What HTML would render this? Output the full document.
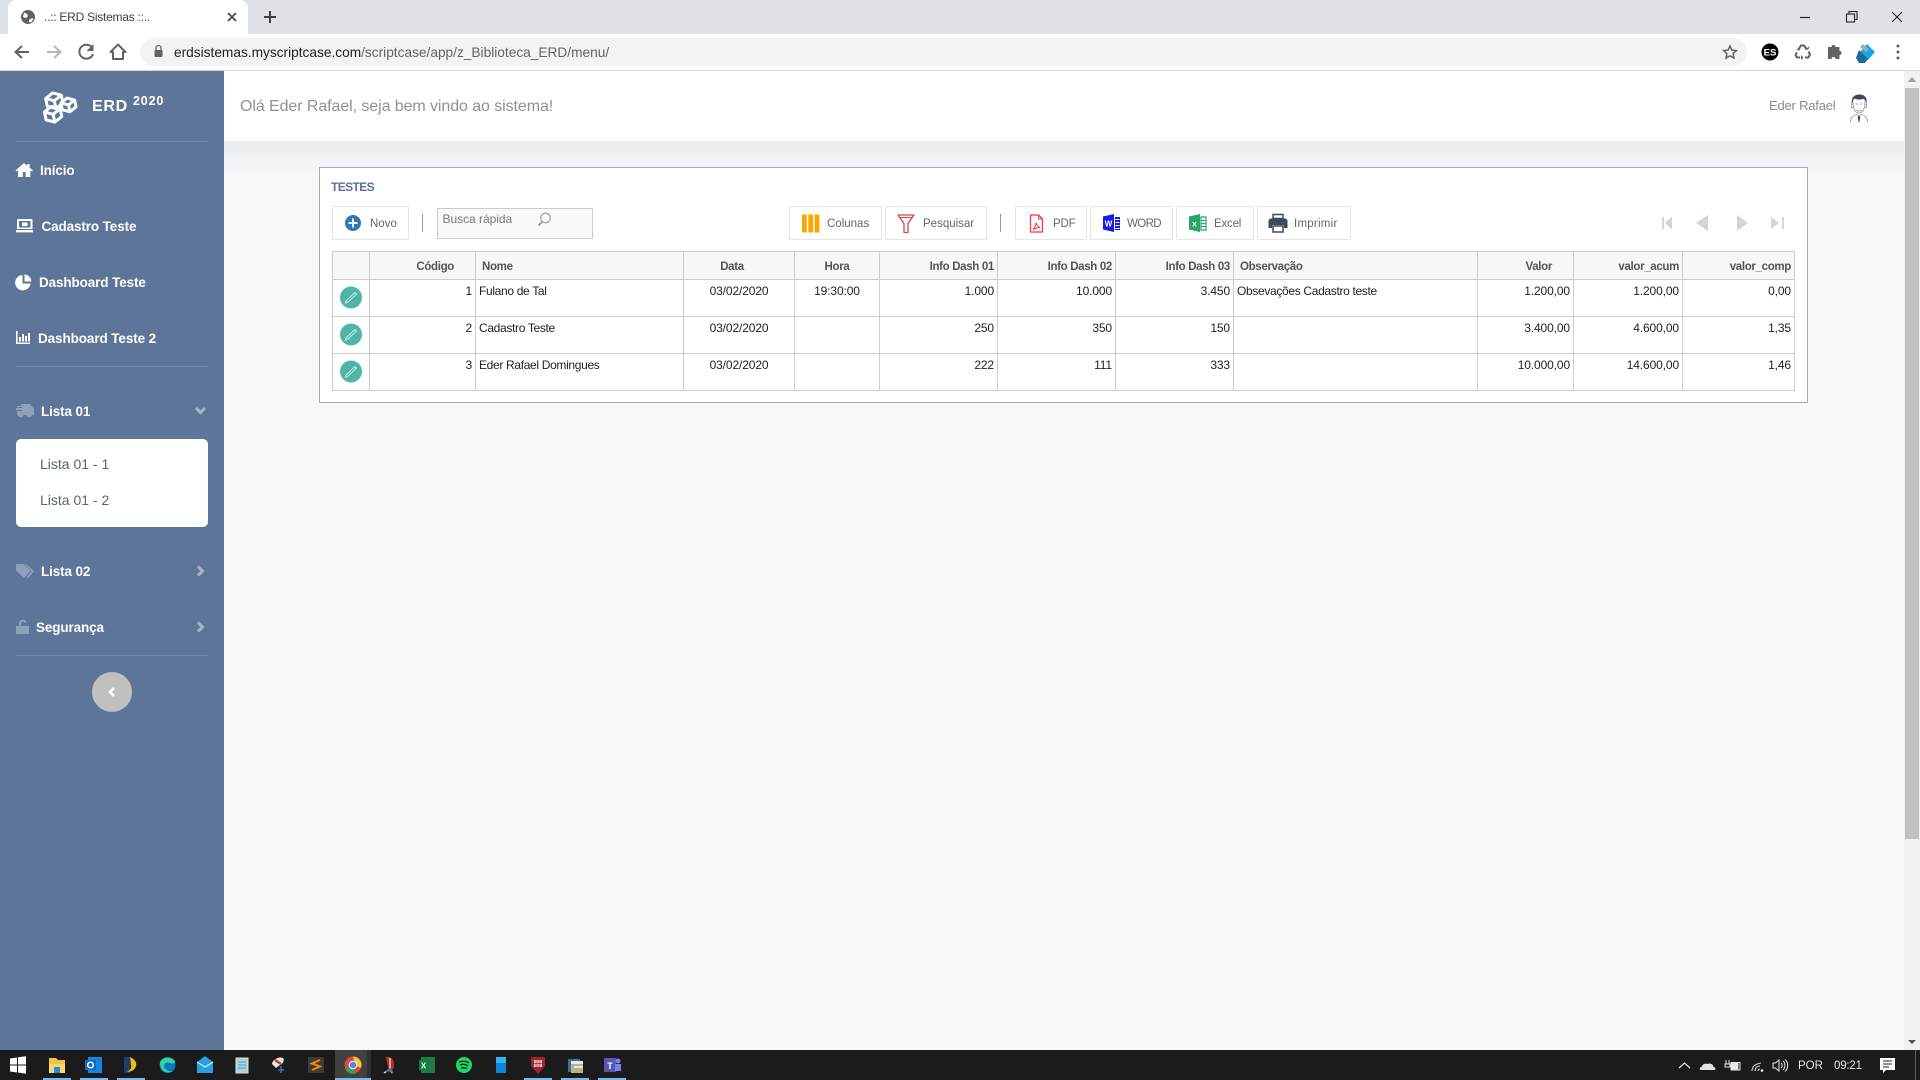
<!DOCTYPE html>
<html lang="pt"><head><meta charset="utf-8"><title>..:: ERD Sistemas ::..</title>
<style>
html,body{margin:0;padding:0;width:1920px;height:1080px;overflow:hidden;background:#f8f8f9;font-family:"Liberation Sans",sans-serif}
.a{position:absolute}
.t{position:absolute;white-space:nowrap;height:20px;line-height:20px}
.btn{position:absolute;top:206px;height:32px;border:1px solid #e1e6ee;border-radius:2px;background:#fff}
.b{font-size:11.5px;color:#666}
.m{font-size:13.5px;font-weight:700;color:#fff;letter-spacing:-.12px}
table{position:absolute;left:332px;top:251px;width:1462px;border-collapse:collapse;table-layout:fixed;font-size:12px;color:#222;background:#fff}
td,th{border:1px solid #ccc;padding:3px;line-height:16px;vertical-align:top;white-space:nowrap;overflow:hidden}
td{letter-spacing:-.12px}
td.L{letter-spacing:-.33px}
th{background:#f7f7f7;color:#555;font-weight:700;font-size:11.5px;letter-spacing:-.33px;padding:7px 3px 3px;line-height:17px}
tr.h{height:28px}tr.r{height:37px}
.R{text-align:right}.C{text-align:center}
</style></head><body>
<div class="a" style="left:0;top:0;width:1920px;height:34px;background:#dee1e6"></div>
<div class="a" style="left:8px;top:0;width:240px;height:34px;background:#fff;border-radius:8px 8px 0 0"></div>
<div class="a" style="left:0;top:34px;width:1920px;height:36px;background:#fff"></div>
<div class="a" style="left:0;top:70px;width:1920px;height:1px;background:#d4d6d9"></div>
<div class="a" style="left:140px;top:38px;width:1607px;height:28px;background:#f1f3f4;border-radius:14px"></div>
<div class="t" style="left:44px;top:7px;font-size:12px;color:#3c4043;letter-spacing:-.25px">..:: ERD Sistemas ::..</div>
<div class="t" style="left:174px;top:43px;font-size:13.7px;color:#202124">erdsistemas.myscriptcase.com<span style="color:#5f6368">/scriptcase/app/z_Biblioteca_ERD/menu/</span></div>

<div class="a" style="left:224px;top:71px;width:1680px;height:979px;background:#f8f8f9"></div>
<div class="a" style="left:224px;top:141px;width:1680px;height:36px;background:linear-gradient(#e9ebef,#f3f4f8 60%,#f8f8f9)"></div>
<div class="a" style="left:224px;top:71px;width:1680px;height:70px;background:#fff"></div>
<div class="t" style="left:240px;top:97px;font-size:16px;color:#8a929e;letter-spacing:-.08px">Olá Eder Rafael, seja bem vindo ao sistema!</div>
<div class="t" style="left:1769px;top:96px;font-size:13px;color:#838c9c;letter-spacing:-.2px">Eder Rafael</div>

<div class="a" style="left:0;top:71px;width:224px;height:979px;background:#5d7599"></div>
<div class="a" style="left:16px;top:141px;width:192px;height:1px;background:#7287a6"></div>
<div class="a" style="left:16px;top:366px;width:192px;height:1px;background:#7287a6"></div>
<div class="a" style="left:16px;top:655px;width:192px;height:1px;background:#7287a6"></div>
<div class="t" style="left:92px;top:97px;font-size:16px;font-weight:700;color:#fff;letter-spacing:.7px">ERD</div>
<div class="t" style="left:133px;top:91px;font-size:12.5px;font-weight:700;color:#fff;letter-spacing:.85px">2020</div>
<div class="t m" style="left:40px;top:161px">Início</div>
<div class="t m" style="left:41.500px;top:217px">Cadastro Teste</div>
<div class="t m" style="left:39px;top:273px">Dashboard Teste</div>
<div class="t m" style="left:38px;top:329px;letter-spacing:-.1px">Dashboard Teste 2</div>
<div class="t m" style="left:41px;top:402px">Lista 01</div>
<div class="a" style="left:16px;top:439px;width:192px;height:88px;background:#fff;border-radius:5px"></div>
<div class="t" style="left:40px;top:454px;font-size:14px;color:#5a6472">Lista 01 - 1</div>
<div class="t" style="left:40px;top:490px;font-size:14px;color:#5a6472">Lista 01 - 2</div>
<div class="t m" style="left:41px;top:561.500px">Lista 02</div>
<div class="t m" style="left:36px;top:617.500px">Segurança</div>

<div class="a" style="left:319px;top:167px;width:1487px;height:234px;background:#fff;border:1px solid #aaa"></div>
<div class="t" style="left:331px;top:177px;font-size:12px;font-weight:700;color:#5f7199;letter-spacing:-.6px">TESTES</div>
<div class="btn" style="left:332px;width:75px"></div>
<div class="t b" style="left:370px;top:213.500px">Novo</div>
<div class="a" style="left:422px;top:214px;width:1px;height:18px;background:#999"></div>
<div class="a" style="left:437px;top:208px;width:154px;height:29px;background:#f9f9f9;border:1px solid #ccc"></div>
<div class="t" style="left:442.500px;top:208.500px;font-size:12px;color:#777;letter-spacing:-.03px">Busca rápida</div>
<div class="btn" style="left:789px;width:91px"></div><div class="t b" style="left:827px;top:213.500px">Colunas</div>
<div class="btn" style="left:885px;width:100px"></div><div class="t b" style="left:923px;top:213.500px">Pesquisar</div>
<div class="a" style="left:1000px;top:214px;width:1px;height:18px;background:#999"></div>
<div class="btn" style="left:1015px;width:70px"></div><div class="t b" style="left:1053px;top:213.500px;letter-spacing:-.2px">PDF</div>
<div class="btn" style="left:1090px;width:81px"></div><div class="t b" style="left:1127px;top:213.500px;letter-spacing:-.6px">WORD</div>
<div class="btn" style="left:1176px;width:76px"></div><div class="t b" style="left:1214px;top:213.500px;letter-spacing:-.2px">Excel</div>
<div class="btn" style="left:1257px;width:92px"></div><div class="t b" style="left:1294px;top:213.500px;letter-spacing:.25px">Imprimir</div>

<table>
<colgroup><col style="width:37px"><col style="width:106px"><col style="width:208px"><col style="width:111px"><col style="width:85px"><col style="width:118px"><col style="width:118px"><col style="width:118px"><col style="width:244px"><col style="width:96px"><col style="width:109px"><col style="width:112px"></colgroup>
<tr class="h"><th></th><th class="R" style="padding-right:21px">Código</th><th style="text-align:left;padding-left:6px">Nome</th><th class="C" style="padding-right:17px">Data</th><th class="C">Hora</th><th class="R">Info Dash 01</th><th class="R">Info Dash 02</th><th class="R">Info Dash 03</th><th style="text-align:left;padding-left:6px">Observação</th><th class="R" style="padding-right:21px">Valor</th><th class="R">valor_acum</th><th class="R">valor_comp</th></tr>
<tr class="r"><td></td><td class="R">1</td><td class="L">Fulano de Tal</td><td class="C">03/02/2020</td><td class="C">19:30:00</td><td class="R">1.000</td><td class="R">10.000</td><td class="R">3.450</td><td class="L">Obsevações Cadastro teste</td><td class="R">1.200,00</td><td class="R">1.200,00</td><td class="R">0,00</td></tr>
<tr class="r"><td></td><td class="R">2</td><td class="L">Cadastro Teste</td><td class="C">03/02/2020</td><td></td><td class="R">250</td><td class="R">350</td><td class="R">150</td><td></td><td class="R">3.400,00</td><td class="R">4.600,00</td><td class="R">1,35</td></tr>
<tr class="r"><td></td><td class="R">3</td><td class="L">Eder Rafael Domingues</td><td class="C">03/02/2020</td><td></td><td class="R">222</td><td class="R">111</td><td class="R">333</td><td></td><td class="R">10.000,00</td><td class="R">14.600,00</td><td class="R">1,46</td></tr>
</table>

<div class="a" style="left:1904px;top:71px;width:16px;height:979px;background:#f1f1f1"></div>
<div class="a" style="left:1905px;top:88px;width:14px;height:751px;background:#c1c1c1"></div>
<div class="a" style="left:0;top:1050px;width:1920px;height:30px;background:#1b1b1b"></div>
<div class="a" style="left:335px;top:1050px;width:32px;height:30px;background:#414141"></div>
<div class="a" style="left:367px;top:1050px;width:4px;height:30px;background:#303030"></div>
<div class="t" style="left:1798px;top:1055.500px;font-size:11.5px;color:#e6e6e6">POR</div>
<div class="t" style="left:1834px;top:1055.500px;font-size:11.5px;color:#e6e6e6;letter-spacing:-.2px">09:21</div>

<svg class="a" style="left:0;top:0" width="1920" height="1080" viewBox="0 0 1920 1080" fill="none">
<!-- favicon -->
<circle cx="28" cy="17" r="7" fill="#5f6368"/><path d="M24 12.500l3 1.500 1 2-2 2-3-1zM29 20l3-2 1.500 1-2.500 3.500-2-.5z" fill="#fff"/>
<path d="M228 13l8 8M236 13l-8 8" stroke="#45484c" stroke-width="1.700"/>
<path d="M270 11v12M264 17h12" stroke="#3c4043" stroke-width="2"/>
<!-- nav -->
<path d="M29 52H16M22 46l-6.500 6 6.500 6" stroke="#5f6368" stroke-width="2"/>
<path d="M47 52h13M54 46l6.500 6-6.500 6" stroke="#b3b6ba" stroke-width="2"/>
<path d="M92 47.500A7 7 0 1 0 93 54" stroke="#5f6368" stroke-width="2"/><path d="M93.500 44v7h-7z" fill="#5f6368"/>
<path d="M110.500 52l7.500-7.500 7.500 7.500h-2.500v7h-10v-7z" stroke="#5f6368" stroke-width="2" stroke-linejoin="round"/>
<rect x="154.500" y="50" width="8" height="7" rx="1" fill="#5f6368"/><path d="M156 50v-2a2.500 2.500 0 0 1 5 0v2" stroke="#5f6368" stroke-width="1.300"/>
<path d="M1730 46l1.900 4.100 4.500.5-3.300 3 .9 4.400-4-2.200-4 2.200.9-4.400-3.300-3 4.500-.5z" stroke="#5f6368" stroke-width="1.500"/>
<circle cx="1770" cy="52" r="8.500" fill="#000"/><text x="1770" y="55.500" text-anchor="middle" font-family="Liberation Sans" font-weight="700" font-size="9.500" fill="#fff">ES</text>
<g stroke="#5f6368" stroke-width="2" stroke-linejoin="round">
<path d="M1798 50l3-4.500h3l2.500 3.500"/><path d="M1808.500 51.500l1.500 3-1.500 3h-3.500"/><path d="M1800 57.500h-3l-1.500-2.500 1.500-2.500"/>
</g>
<path d="M1805 50l3.500-.5 1-3.500zM1801 55l2.500 2.500-2.500 2.500zM1796 49.500l3.500 1 1-2.500z" fill="#5f6368"/>
<path d="M1828 48h3.500a2 2 0 0 1 4 0h4v4a2 2 0 0 1 0 4v4h-4a2 2 0 0 0-4 0h-3.500z" fill="#5f6368" transform="translate(0,-1)"/>
<path d="M1867 44l8 8-7 8-8-8z" fill="#17a6ee"/><path d="M1858 51l9 9-3 4-6 0-3-5z" fill="#1f6a9c" transform="translate(1,-1)"/><path d="M1861 44l3-3 6 5-3 3z" fill="#a9a9a9" transform="translate(-1,3)"/>
<circle cx="1898" cy="46" r="1.500" fill="#5f6368"/><circle cx="1898" cy="52" r="1.500" fill="#5f6368"/><circle cx="1898" cy="58" r="1.500" fill="#5f6368"/>
<!-- window -->
<path d="M1800 17.500h10" stroke="#222" stroke-width="1.200"/>
<rect x="1846.500" y="14" width="8" height="8" stroke="#222" stroke-width="1.100"/><path d="M1849 14v-2.500h8v8h-2.500" stroke="#222" stroke-width="1.100"/>
<path d="M1892 12l10 10M1902 12l-10 10" stroke="#222" stroke-width="1.100"/>
<!-- logo -->
<g stroke="#fff" stroke-width="3" stroke-linejoin="round" transform="translate(-1.500 0) rotate(-12 60 106)">
<g transform="translate(57 100)"><path d="M-8-4L0-8 8-4V4L0 8-8 4z"/><path d="M-8-4L0 0 8-4M0 0V8"/></g>
<g transform="translate(70 107)"><path d="M-7-3.500L0-7 7-3.500V3.500L0 7-7 3.500z"/><path d="M-7-3.500L0 0 7-3.500M0 0V7"/></g>
<g transform="translate(53 113)"><path d="M-8-4L0-8 8-4V4L0 8-8 4z"/><path d="M-8-4L0 0 8-4M0 0V8"/></g>
</g>
<!-- menu icons -->
<g fill="#fff">
<path d="M24 163l-8.500 7.500 1 1 1.500-1.300V177h4.800v-5h2.800v5h4.800v-6.800l1.500 1.300 1-1-3.300-3V164h-2.300v1.800z"/>
<path d="M18 219h13.500a1 1 0 0 1 1 1v9h-15.500v-9a1 1 0 0 1 1-1zm1 2v6.500h11.500V221zM16 230h17v2.400H16z" fill-rule="evenodd"/><path d="M22 222.500h5.500v3.500H22z"/>
<path d="M22.500 275a7.700 7.700 0 1 0 8 8.500h-8zM24.500 274.500a7 7 0 0 1 6.800 7h-6.800z"/>
<path d="M16 331h1.600v11.500H30v1.500H16zM19 337h2v4.500h-2zM22 334h2v7.500h-2zM25 336h2v5.500h-2zM28 333h2v8.500h-2z"/>
</g>
<g fill="#8ea0ba">
<path d="M21 404h9l4 5v6h-2a2.800 2.800 0 0 1-5.500 0h-3a2.800 2.800 0 0 1-5.500 0h-1v-4h5v-1h-6v-2h6v-1h-5v-1h4z"/>
<path d="M16 564h7.500l7 7-6.500 7-8-7.500zM26 564l8 7.500-6.500 7-1.200-1.200 5.200-5.800-6.800-7.500z"/>
<path d="M17 626h12v8H16v-8zM19 626v-3a3.800 3.800 0 0 1 7.500-.5h-2.300a1.600 1.600 0 0 0-3 .5v3z"/>
</g>
<g stroke="#a7b5ca" stroke-width="3">
<path d="M196 408l4.500 4.500 4.500-4.500"/><path d="M198 566.500l4.500 4.500-4.500 4.500"/><path d="M198 622.500l4.500 4.500-4.500 4.500"/>
</g>
<circle cx="112" cy="692" r="20" fill="#c0c0c0"/><path d="M114 688l-4 4 4 4" stroke="#fff" stroke-width="2.500"/>
<!-- avatar -->
<g stroke="#9aa0a8" stroke-width=".9">
<path d="M1853 101c0 8 2 12 6 12s6-4 6-12" fill="#fff"/><path d="M1853 104h-1.500v3.500h2M1865 104h1.500v3.500h-2"/>
<path d="M1850.500 122c0-5 3-6.500 6-7.500l2.500 1.500 2.500-1.500c3 1 6 2.500 6 7.500"/>
<path d="M1856 110c2 1.500 4 1.500 6 0M1855.500 104h2.500M1860 104h2.500"/>
</g>
<path d="M1859 115.500l-1.300 1.500 1 5.500h.6l1-5.500z" fill="#39424e"/>
<path d="M1852 104c-1.500-7 3-9.500 7.500-9.500 5.500 0 8 3.500 7 9-1-3-2-4.500-3.500-4.500-3 1-7 .5-8.500-.5-1.300 1-2 3-2.500 5.500z" fill="#3f4a59"/>
<!-- toolbar icons -->
<circle cx="353" cy="223" r="8" fill="#2a7ab8"/><path d="M353 218.500v9M348.500 223h9" stroke="#fff" stroke-width="2"/>
<circle cx="545.500" cy="218" r="4.800" stroke="#999" stroke-width="1.100"/><path d="M542 222l-3.500 3.500" stroke="#999" stroke-width="1.800"/>
<path d="M802 214.500h4.800v18H802zM808.300 214.500h4.800v18h-4.800zM814.600 214.500h4.800v18h-4.800z" fill="#ffa500"/>
<path d="M898 215h16l-6 8.500v9h-4v-9z" stroke="#d8474b" stroke-width="1.300" stroke-linejoin="round"/><path d="M900.500 217.500h11" stroke="#d8474b" stroke-width="1"/>
<path d="M1030.500 215h8l4 4v13h-12z" stroke="#f2374a" stroke-width="1.300"/><path d="M1038.500 215v4h4M1033 229.500c2-2 3-5 3-7 1 3 2.500 4.500 4 5-2 0-5 1-7 2z" stroke="#f2374a" stroke-width="1"/>
<path d="M1103 216.500l11-2.500v18l-11-2.500z" fill="#1a1ae0"/><path d="M1115 217h5v13h-5z" fill="#1a1ae0"/><path d="M1115.500 219.500h4M1115.500 222.500h4M1115.500 225.500h4M1115.500 228.500h4" stroke="#fff" stroke-width="1"/><text x="1108.500" y="226.500" text-anchor="middle" font-family="Liberation Sans" font-weight="700" font-size="8" fill="#fff">W</text>
<path d="M1189 216.500l11-2.500v18l-11-2.500z" fill="#2aa568"/><path d="M1201 217h5v13h-5z" stroke="#2aa568" stroke-width="1.200"/><path d="M1201.500 220.500h4M1201.500 223.500h4M1201.500 226.500h4" stroke="#2aa568"/><text x="1194.500" y="226.500" text-anchor="middle" font-family="Liberation Sans" font-weight="700" font-size="8.500" fill="#fff">x</text>
<path d="M1273 214.500h10v4h-10z" fill="#fff" stroke="#3e4a59" stroke-width="1.500"/><path d="M1271 218.500h14a2.500 2.500 0 0 1 2.500 2.500v7h-3.500v-3h-12v3h-3.500v-7a2.500 2.500 0 0 1 2.500-2.500z" fill="#3e4a59"/><path d="M1273 226h10v6h-10z" fill="#fff" stroke="#3e4a59" stroke-width="1.500"/>
<!-- pager -->
<g fill="#d0d5de"><path d="M1662 217h2v12h-2zM1665 223l7-6.500v13zM1696 223l12-8v16zM1737 215l11 8-11 8zM1771 217l8 6-8 6zM1782 217h2v12h-2z"/></g>
<!-- edit -->
<g>
<circle cx="351" cy="297.500" r="11" fill="#4db6a8"/><path d="M346 301l9-8.500 1.500 1.500-9 8.500-2.200.7z" stroke="#d2eee9" stroke-width=".9"/>
<circle cx="351" cy="334.500" r="11" fill="#4db6a8"/><path d="M346 338l9-8.500 1.500 1.500-9 8.500-2.200.7z" stroke="#d2eee9" stroke-width=".9"/>
<circle cx="351" cy="371.500" r="11" fill="#4db6a8"/><path d="M346 375l9-8.500 1.500 1.500-9 8.500-2.200.7z" stroke="#d2eee9" stroke-width=".9"/>
</g>
<!-- scroll arrows -->
<path d="M1912 77l4.500 5h-9z" fill="#a3a3a3"/><path d="M1912 1044l-4-4h8z" fill="#505050"/>
<!-- taskbar -->
<path d="M10 1058.500l7-1v7h-7zM18 1057.300l8-1.100v8.300h-8zM10 1065.500h7v7l-7-1zM18 1065.500h8v8.200l-8-1.200z" fill="#fff"/>
<path d="M49 1058h7l2 2h7v13H49z" fill="#f6c244"/><path d="M49 1064h16v9H49z" fill="#fbd66e"/><path d="M54 1067h6v6h-6z" fill="#2a86d6"/>
<rect x="88" y="1057" width="14" height="16" fill="#1486e0"/><rect x="85" y="1060" width="11" height="10" fill="#0f6cc0"/><circle cx="90.500" cy="1065" r="2.800" stroke="#fff" stroke-width="1.400"/>
<path d="M124 1057h6v16h-6z" fill="#1c3f6e"/><path d="M130 1057c5 2 7 6 6 9-1 4-5 6-9 6 3-2 5-4 4-7z" fill="#f4b81c"/>
<circle cx="167.500" cy="1065" r="8" fill="#0c76c4"/><path d="M160 1062c2-5 12-6 15-1 1 3-3 3-5 2-3-1-6 0-6 3 0 3 4 6 9 5-4 3-13 2-13-9z" fill="#38d39b"/>
<path d="M197 1062l8-6 8 6v11h-16z" fill="#27a0e3"/><path d="M197 1062l8 5 8-5" stroke="#fff" stroke-width="1"/>
<path d="M236 1058h12v15h-12z" fill="#a4d3e2" stroke="#e8e0c0" stroke-width="1"/><path d="M238 1062h8M238 1065h8M238 1068h8" stroke="#6a97a8" stroke-width="1"/>
<path d="M272 1064c0-4 7-8 11-6 2 2 0 6-3 7l-4 3z" fill="#e7e3df"/><path d="M275 1060l6 4" stroke="#d9342f" stroke-width="2.500"/><path d="M281 1066v7M278 1070h6" stroke="#2a7ab8" stroke-width="1.500"/>
<rect x="308" y="1057" width="16" height="16" rx="1" fill="#3b3b3b"/><path d="M320 1060l-8 3.500 8 3-8 3.500" stroke="#f58a0b" stroke-width="2"/>
<circle cx="353" cy="1065" r="8.500" fill="#e2453b"/><path d="M353 1065l-7.500 4.500a8.500 8.500 0 0 0 10 4z" fill="#37a34f"/><path d="M353 1056.500a8.500 8.500 0 0 1 8 11.500l-5-2z" fill="#f8c927"/><circle cx="353" cy="1065" r="3.800" fill="#4c88ef" stroke="#fff"/>
<path d="M386 1057c3-1 8 1 8 7s-3 8-5 8z" fill="#b5311c"/><path d="M390 1058v12M384 1073l6-4 2 4" stroke="#cfd4da" stroke-width="1.500"/><path d="M386 1072l4-3 3 4" stroke="#2a7ab8" stroke-width="1.500"/>
<rect x="421" y="1057" width="14" height="16" fill="#1f7a47"/><rect x="419" y="1060" width="9" height="10" fill="#107c41"/><text x="423.500" y="1068.500" text-anchor="middle" font-family="Liberation Sans" font-weight="700" font-size="8" fill="#fff">X</text>
<circle cx="464" cy="1065" r="8" fill="#1ed760"/><path d="M459 1062c3-1 7-1 10 1M460 1065c2-1 6-1 8 1M461 1068c2-.5 4-.5 6 .5" stroke="#1b1b1b" stroke-width="1.300"/>
<path d="M496 1057h10v16h-10z" fill="#0f83d8"/><path d="M496 1057h10v6h-10z" fill="#32b6f0"/>
<path d="M531 1057h14v9l-7 8-7-8z" fill="#a1232b"/><rect x="534" y="1060" width="8" height="7" fill="#f2e6e6"/><path d="M536 1060v7M538 1060v7M540 1060v7M534 1063.500h8" stroke="#a1232b" stroke-width=".8"/>
<path d="M568 1059h12v13h-12z" fill="#3f6d9f"/><path d="M571 1061h12v12h-12z" fill="#b9b487"/><path d="M571 1061h12v3h-12zM574 1066h9v2h-9z" fill="#e9e9e0"/>
<rect x="604" y="1058" width="12" height="14" fill="#5558ae"/><circle cx="618" cy="1061" r="2.500" fill="#7b83eb"/><path d="M615 1064h6v7h-6z" fill="#7b83eb"/><text x="610" y="1069" text-anchor="middle" font-family="Liberation Sans" font-weight="700" font-size="9" fill="#fff">T</text>
<g fill="#76b9ed"><rect x="43" y="1078" width="28" height="2"/><rect x="80" y="1078" width="28" height="2"/><rect x="117" y="1078" width="28" height="2"/><rect x="335" y="1078" width="36" height="2"/><rect x="524" y="1078" width="28" height="2"/><rect x="561" y="1078" width="28" height="2"/><rect x="598" y="1078" width="28" height="2"/></g>
<!-- tray -->
<path d="M1679 1068l5.500-5 5.500 5" stroke="#e6e6e6" stroke-width="1.200"/>
<path d="M1701 1070c-2 0-1.500-3 .5-3 1-3 4-4 6-3 3-1.500 6 1 6 3 2 0 3 3 .5 3z" fill="#e6e6e6"/>
<path d="M1726 1060v4M1729 1060v4M1725 1064h5v3h-5zM1731 1065.500h1.500" stroke="#e6e6e6" stroke-width="1"/><rect x="1731" y="1062.500" width="9" height="7.500" stroke="#e6e6e6"/><rect x="1731.500" y="1063" width="7" height="6.500" fill="#e6e6e6"/>
<path d="M1752 1071c0-4 3-7 9-8M1755 1071c0-3 2-5 5-5M1758 1071c0-1 1-2 2-2" stroke="#d8d8d8" stroke-width="1"/><circle cx="1762" cy="1070.500" r="1.300" fill="#fff"/>
<path d="M1773 1063h2.500l3.500-3v11l-3.500-3h-2.500zM1781 1063c1.500 1 1.500 4 0 5M1783 1061c2.500 2 2.500 7 0 9M1785 1059.500c3.500 2.500 3.500 9 0 12" stroke="#e6e6e6" stroke-width="1"/>
<path d="M1880 1058h15v12h-9l-3 3v-3h-3z" fill="#fff"/><path d="M1883 1061h9M1883 1064h9M1883 1067h6" stroke="#222" stroke-width="1"/>
<path d="M1915.500 1050v30" stroke="#5a5a5a"/>
</svg>
</body></html>
